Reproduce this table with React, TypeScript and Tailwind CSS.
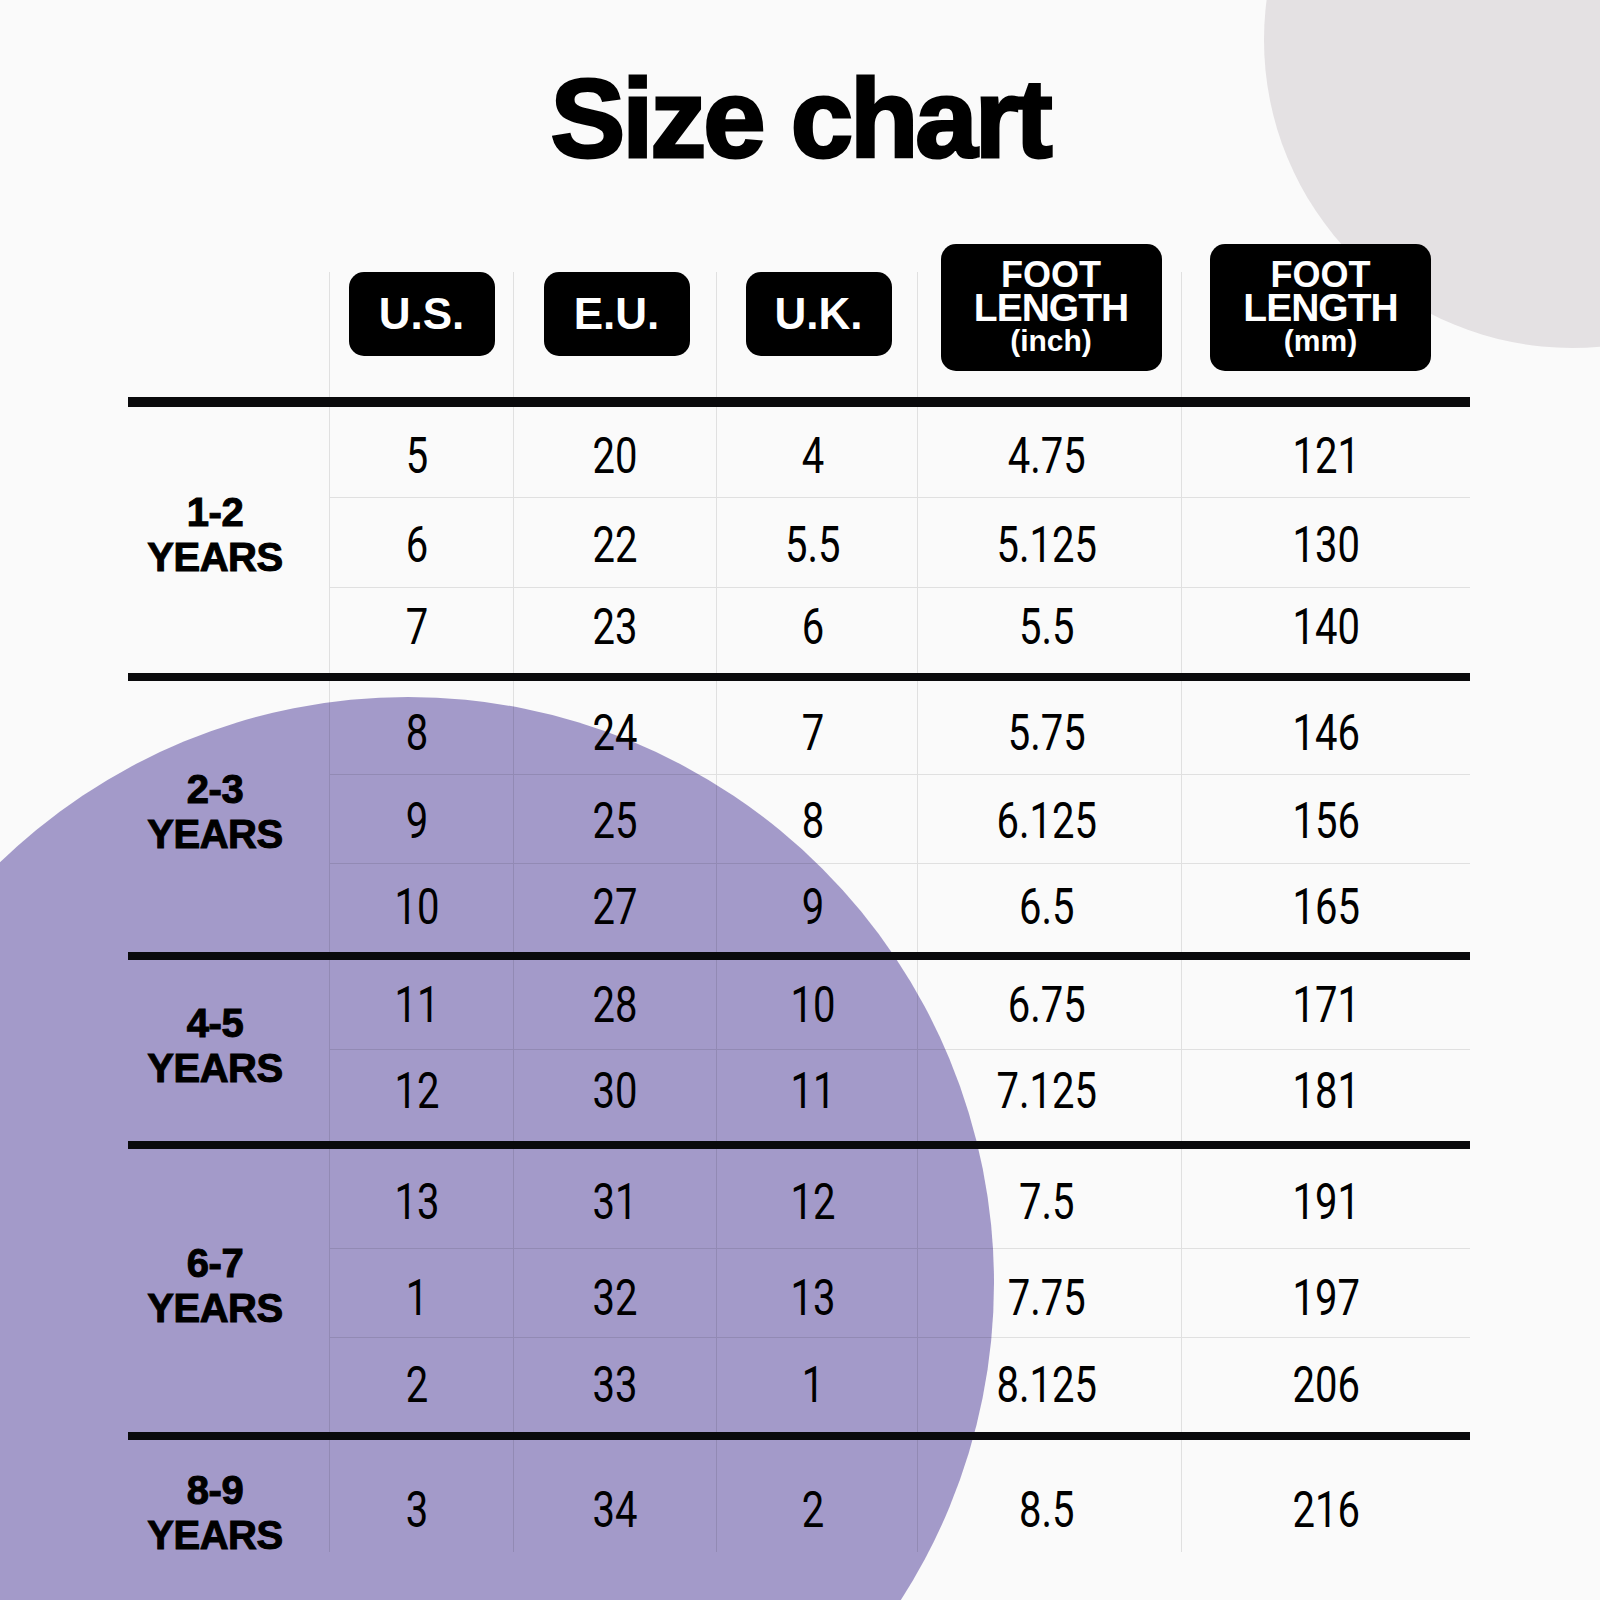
type Group = {
  age: string;
  rows: string[][];
  heights: string[];
  nudge: string[];
  last?: boolean;
};

const groups: Group[] = [
  {
    age: "1-2",
    rows: [
      ["5", "20", "4", "4.75", "121"],
      ["6", "22", "5.5", "5.125", "130"],
      ["7", "23", "6", "5.5", "140"],
    ],
    heights: ["h-[90px]", "h-[90px]", "h-[86px]"],
    nudge: ["pt-[8px]", "pt-[4px]", "pb-[8px]"],
  },
  {
    age: "2-3",
    rows: [
      ["8", "24", "7", "5.75", "146"],
      ["9", "25", "8", "6.125", "156"],
      ["10", "27", "9", "6.5", "165"],
    ],
    heights: ["h-[93px]", "h-[89px]", "h-[89px]"],
    nudge: ["pt-[10px]", "pt-[4px]", "pb-[2px]"],
  },
  {
    age: "4-5",
    rows: [
      ["11", "28", "10", "6.75", "171"],
      ["12", "30", "11", "7.125", "181"],
    ],
    heights: ["h-[89px]", "h-[92px]"],
    nudge: ["", "pb-[10px]"],
  },
  {
    age: "6-7",
    rows: [
      ["13", "31", "12", "7.5", "191"],
      ["1", "32", "13", "7.75", "197"],
      ["2", "33", "1", "8.125", "206"],
    ],
    heights: ["h-[99px]", "h-[89px]", "h-[95px]"],
    nudge: ["pt-[6px]", "pt-[10px]", ""],
  },
  {
    age: "8-9",
    rows: [["3", "34", "2", "8.5", "216"]],
    heights: ["h-[112px]"],
    nudge: ["pt-[28px]"],
    last: true,
  },
];

// widths of the five data columns (the age column is separate)
const colW = ["w-[184px]", "w-[203px]", "w-[201px]", "w-[264px]", "w-[289px]"];
// small horizontal corrections so values sit where the chart has them
const colShift = ["pr-[8px]", "", "pr-[8px]", "pr-[6px]", ""];

function SmallHead({ label }: { label: string }) {
  return (
    <div className="w-[146px] h-[84px] rounded-[15px] bg-black flex items-center justify-center text-white text-[44px] font-bold leading-none">
      {label}
    </div>
  );
}

function FootHead({ unit }: { unit: string }) {
  return (
    <div className="-mt-[28px] w-[221px] h-[127px] rounded-[15px] bg-black flex flex-col items-center justify-center text-white font-bold">
      <span className="text-[36px] leading-[33px]">FOOT</span>
      <span className="text-[39px] leading-[33px] tracking-[-1px]">LENGTH</span>
      <span className="text-[30px] leading-[33px]">{unit}</span>
    </div>
  );
}

function Thick({ h }: { h: string }) {
  return <div className={`${h} w-full bg-[#0a0a0c]`} />;
}

export default function App() {
  return (
    <div className="relative w-[1600px] h-[1600px] overflow-hidden bg-[#fafafa] font-['Liberation_Sans',Arial,sans-serif] text-black">
      {/* background decoration */}
      <div className="absolute left-[1264px] top-[-268px] w-[616px] h-[616px] rounded-full bg-[#e4e1e3]" />
      <div className="absolute left-[-178px] top-[697px] w-[1172px] h-[1172px] rounded-full bg-[#a39ac9]" />

      <div className="relative z-10">
        <h1 className="pt-[63px] text-center text-[112px] leading-[112px] font-bold tracking-[-3px] [-webkit-text-stroke:3px_#000]">
          Size chart
        </h1>

        <div className="mt-[97px] ml-[128px] w-[1342px]">
          {/* header */}
          <div className="flex h-[125px]">
            <div className="w-[201px]" />
            <div className={`${colW[0]} border-l border-black/10 flex justify-center`}>
              <SmallHead label="U.S." />
            </div>
            <div className={`${colW[1]} border-l border-black/10 flex justify-center pl-[3px]`}>
              <SmallHead label="E.U." />
            </div>
            <div className={`${colW[2]} border-l border-black/10 flex justify-center pl-[3px]`}>
              <SmallHead label="U.K." />
            </div>
            <div className={`${colW[3]} border-l border-black/10 flex justify-center pl-[3px]`}>
              <FootHead unit="(inch)" />
            </div>
            <div className={`${colW[4]} border-l border-black/10 flex justify-center pr-[11px]`}>
              <FootHead unit="(mm)" />
            </div>
          </div>

          <Thick h="h-[10px]" />

          {groups.map((g, gi) => (
            <div key={g.age}>
              <div className="flex">
                <div
                  className={`w-[201px] flex flex-col items-center justify-center pr-[27px] pb-[10px] text-[40px] leading-[45px] font-bold tracking-[-0.5px] [-webkit-text-stroke:1px_#000] ${
                    g.last ? "pt-[28px]" : ""
                  }`}
                >
                  <span>{g.age}</span>
                  <span>YEARS</span>
                </div>
                <div className="flex flex-col">
                  {g.rows.map((r, ri) => (
                    <div
                      key={ri}
                      className={`flex ${g.heights[ri]} ${ri > 0 ? "border-t border-black/10" : ""}`}
                    >
                      {r.map((v, ci) => (
                        <div
                          key={ci}
                          className={`${colW[ci]} ${colShift[ci]} ${g.nudge[ri]} border-l border-black/10 flex items-center justify-center`}
                        >
                          <span className="inline-block scale-x-[0.8] font-['Roboto',sans-serif] font-normal text-[50px] leading-none">
                            {v}
                          </span>
                        </div>
                      ))}
                    </div>
                  ))}
                </div>
              </div>
              {gi < groups.length - 1 && <Thick h="h-[8px]" />}
            </div>
          ))}
        </div>
      </div>
    </div>
  );
}
